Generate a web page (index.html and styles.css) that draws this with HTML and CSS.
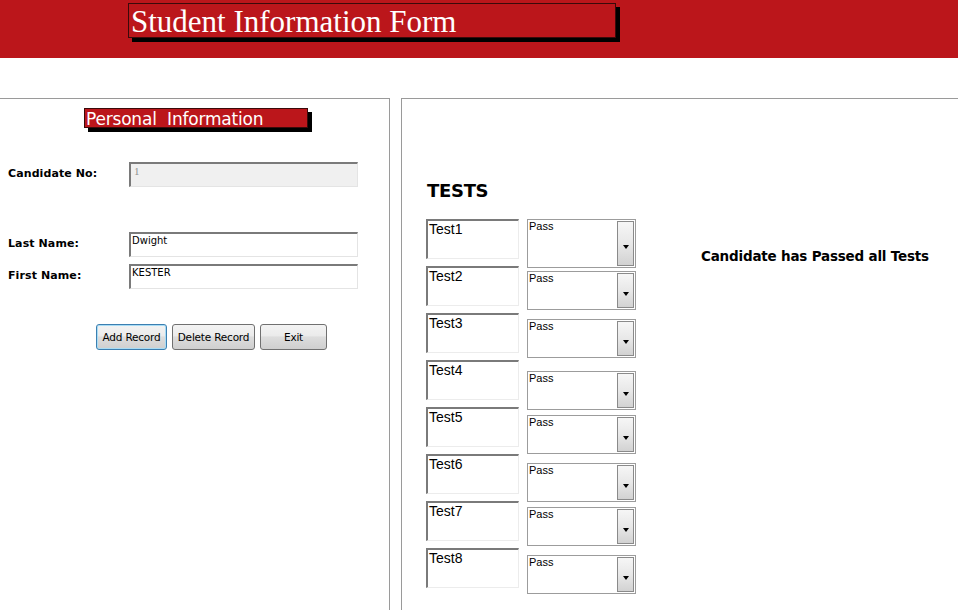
FILE: index.html
```html
<!DOCTYPE html>
<html>
<head>
<meta charset="utf-8">
<title>Student Information Form</title>
<link rel="stylesheet" href="styles.css">
</head>
<body>
<header class="banner">
  <div class="banner-title">Student Information Form</div>
</header>
<main class="content">
  <section class="personal">
    <div class="section-title">Personal  Information</div>
    <div class="form-row row-candidate">
      <label class="field-label">Candidate No:</label>
      <div class="field field-disabled">1</div>
    </div>
    <div class="form-row row-last">
      <label class="field-label">Last Name:</label>
      <div class="field">Dwight</div>
    </div>
    <div class="form-row row-first">
      <label class="field-label">First Name:</label>
      <div class="field">KESTER</div>
    </div>
    <div class="buttons">
      <button class="btn btn-add">Add Record</button>
      <button class="btn btn-delete">Delete Record</button>
      <button class="btn btn-exit">Exit</button>
    </div>
  </section>
  <section class="tests">
    <h2 class="tests-title">TESTS</h2>
    <div class="tests-body">
      <div class="test-names">
        <div class="test-box">Test1</div>
        <div class="test-box">Test2</div>
        <div class="test-box">Test3</div>
        <div class="test-box">Test4</div>
        <div class="test-box">Test5</div>
        <div class="test-box">Test6</div>
        <div class="test-box">Test7</div>
        <div class="test-box">Test8</div>
      </div>
      <div class="test-results">
        <div class="combo combo-1"><span class="combo-text">Pass</span><span class="combo-btn"><span class="arrow"></span></span></div>
        <div class="combo combo-2"><span class="combo-text">Pass</span><span class="combo-btn"><span class="arrow"></span></span></div>
        <div class="combo combo-3"><span class="combo-text">Pass</span><span class="combo-btn"><span class="arrow"></span></span></div>
        <div class="combo combo-4"><span class="combo-text">Pass</span><span class="combo-btn"><span class="arrow"></span></span></div>
        <div class="combo combo-5"><span class="combo-text">Pass</span><span class="combo-btn"><span class="arrow"></span></span></div>
        <div class="combo combo-6"><span class="combo-text">Pass</span><span class="combo-btn"><span class="arrow"></span></span></div>
        <div class="combo combo-7"><span class="combo-text">Pass</span><span class="combo-btn"><span class="arrow"></span></span></div>
        <div class="combo combo-8"><span class="combo-text">Pass</span><span class="combo-btn"><span class="arrow"></span></span></div>
      </div>
      <div class="message">Candidate has Passed all Tests</div>
    </div>
  </section>
</main>
</body>
</html>
```
FILE: styles.css
```css
html, body {
  margin: 0;
  padding: 0;
  background: #ffffff;
}
body {
  width: 958px;
  height: 610px;
  overflow: hidden;
  font-family: "DejaVu Sans", Verdana, sans-serif;
  color: #000;
}
.banner {
  height: 58px;
  background: #bb161b;
  padding-top: 3px;
  padding-left: 128px;
  box-sizing: border-box;
}
.banner-title {
  width: 484px;
  height: 33px;
  border: 1px solid #3a0a0a;
  box-shadow: 4px 4px 0 #000;
  font-family: "Liberation Serif", "Times New Roman", serif;
  font-size: 31px;
  line-height: 36px;
  color: #fff;
  padding-left: 2px;
  box-sizing: content-box;
  overflow: hidden;
  white-space: nowrap;
}
.content {
  display: flex;
  margin-top: 40px;
  height: 512px;
}
.personal {
  width: 390px;
  border-top: 1px solid #9a9a9a;
  border-right: 1px solid #9a9a9a;
  padding-top: 9px;
  box-sizing: border-box;
}
.section-title {
  margin-left: 84px;
  width: 224px;
  height: 20px;
  background: #bb161b;
  border: 1px solid #3a0a0a;
  box-sizing: border-box;
  box-shadow: 4px 4px 0 #000;
  color: #fff;
  font-size: 17px;
  line-height: 21px;
  padding-left: 1px;
  white-space: pre;
  letter-spacing: -0.2px;
  overflow: hidden;
}
.form-row {
  display: flex;
  align-items: center;
}
.row-candidate { margin-top: 34px; }
.row-last { margin-top: 45px; }
.row-first { margin-top: 7px; }
.field-label {
  width: 129px;
  padding-left: 8px;
  box-sizing: border-box;
  font-size: 11px;
  font-weight: bold;
  letter-spacing: 0.1px;
  position: relative;
  top: -1px;
}
.field {
  width: 229px;
  height: 25px;
  box-sizing: border-box;
  border-top: 2px solid #7a7a7a;
  border-left: 2px solid #7a7a7a;
  border-right: 1px solid #e4e4e4;
  border-bottom: 1px solid #e4e4e4;
  background: #fff;
  font-size: 10px;
  padding: 1px 0 0 1px;
  line-height: 12px;
}
.field-disabled {
  background: #f0f0f0;
  color: #909090;
  font-family: "Liberation Serif", serif;
  font-size: 11px;
  padding-left: 3px;
}
.buttons {
  display: flex;
  gap: 5px;
  margin-top: 35px;
  margin-left: 96px;
}
.btn {
  height: 26px;
  box-sizing: border-box;
  border: 1px solid #707070;
  border-radius: 3px;
  background: linear-gradient(#f3f3f3 0%, #ebebeb 45%, #dddddd 50%, #cfcfcf 100%);
  font-family: "DejaVu Sans", Verdana, sans-serif;
  font-size: 10.5px;
  color: #000;
  padding: 0;
  letter-spacing: -0.2px;
}
.btn-add {
  width: 71px;
  border-color: #3c7fb1;
  box-shadow: inset 0 0 0 1px #a8dcf5;
}
.btn-delete { width: 83px; }
.btn-exit { width: 67px; }
.tests {
  flex: 1;
  margin-left: 11px;
  border-top: 1px solid #9a9a9a;
  border-left: 1px solid #9a9a9a;
  padding-left: 25px;
  box-sizing: border-box;
}
.tests-title {
  margin: 81px 0 0 0;
  font-size: 18px;
  font-weight: bold;
  line-height: 22px;
  letter-spacing: -0.3px;
}
.tests-body {
  display: flex;
  margin-top: 17px;
  margin-left: -1px;
}
.test-names {
  display: flex;
  flex-direction: column;
  gap: 7px;
}
.test-box {
  width: 93px;
  height: 40px;
  box-sizing: border-box;
  border-top: 2px solid #7a7a7a;
  border-left: 2px solid #7a7a7a;
  border-right: 1px solid #ececec;
  border-bottom: 1px solid #ececec;
  font-family: "Liberation Sans", Arial, sans-serif;
  font-size: 14px;
  line-height: 16px;
  padding-left: 1px;
}
.test-results {
  display: flex;
  flex-direction: column;
  margin-left: 8px;
}
.combo {
  width: 109px;
  height: 39px;
  box-sizing: border-box;
  border: 1px solid #9c9c9c;
  background: #fff;
  display: flex;
  justify-content: space-between;
}
.combo-text {
  font-family: "Liberation Sans", Arial, sans-serif;
  font-size: 11px;
  line-height: 13px;
  padding-left: 1px;
}
.combo-btn {
  width: 17px;
  margin: 1px;
  box-sizing: border-box;
  border: 1px solid #8a8a8a;
  background: linear-gradient(#f6f6f6 0%, #e8e8e8 50%, #d2d2d2 100%);
  display: flex;
  align-items: center;
  justify-content: center;
  padding-top: 6px;
}
.arrow {
  width: 0;
  height: 0;
  border-left: 3.5px solid transparent;
  border-right: 3.5px solid transparent;
  border-top: 4px solid #000;
}
.combo-1 { height: 49px; }
.combo-2 { margin-top: 3px; }
.combo-3 { margin-top: 9px; }
.combo-4 { margin-top: 13px; }
.combo-5 { margin-top: 5px; }
.combo-6 { margin-top: 9px; }
.combo-7 { margin-top: 5px; }
.combo-8 { margin-top: 9px; }
.message {
  margin-left: 65px;
  margin-top: 29px;
  font-size: 13.5px;
  font-weight: bold;
  letter-spacing: -0.2px;
  white-space: nowrap;
}
```
